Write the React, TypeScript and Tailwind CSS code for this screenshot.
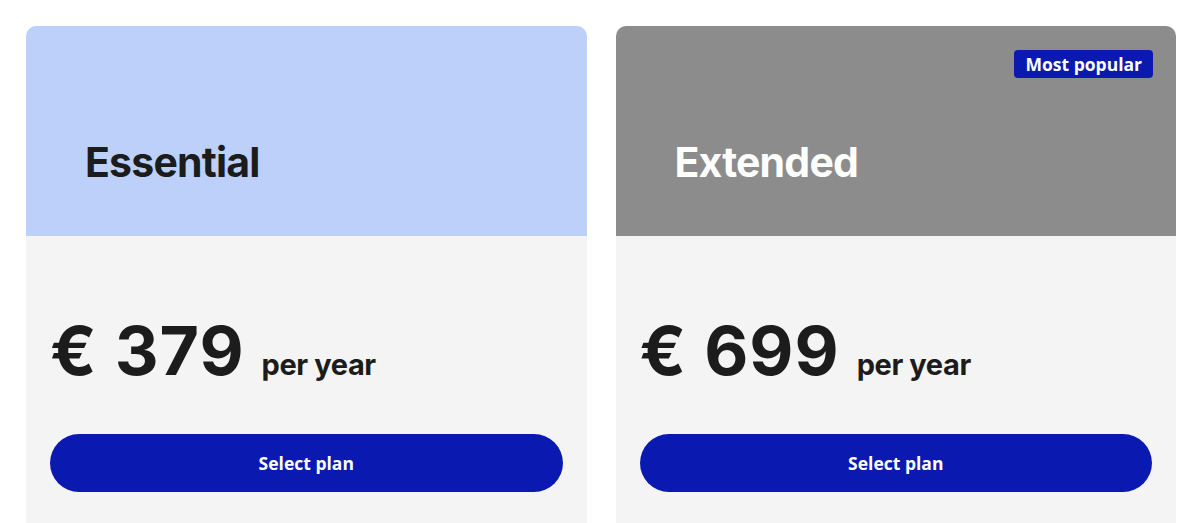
import React from "react";

const heading = { fontFamily: "Inter, 'Noto Sans', sans-serif" };

function Card({
  title,
  price,
  headerClass,
  titleClass,
  badge,
}: {
  title: string;
  price: string;
  headerClass: string;
  titleClass: string;
  badge?: string;
}) {
  return (
    <div className="flex flex-col">
      <div className={`relative h-[210px] rounded-t-[10px] pl-[59px] pt-[116px] ${headerClass}`}>
        {badge && (
          <span
            className="absolute right-[23px] top-[24px] flex h-[28px] items-center rounded-[4px] bg-[#0a1ab0] px-[11px] text-[17.5px] font-bold text-white"
            style={{ fontFamily: "'Open Sans', sans-serif" }}
          >
            {badge}
          </span>
        )}
        <h2
          className={`m-0 text-[41px] font-bold leading-none tracking-[-0.8px] ${titleClass}`}
          style={heading}
        >
          {title}
        </h2>
      </div>
      <div className="flex flex-col bg-[#f4f4f4] px-[24px] pb-[40px] pt-[80px]">
        <div className="flex items-baseline gap-[17px] text-[#1c1c1c]" style={heading}>
          <span className="text-[68px] font-bold leading-none tracking-[1px]">{price}</span>
          <span className="text-[29px] font-bold leading-none tracking-[-0.4px]">per year</span>
        </div>
        <button
          className="mt-[50px] flex h-[58px] w-full items-center justify-center rounded-full bg-[#0a1ab0] text-[17.5px] font-bold text-white"
          style={{ fontFamily: "'Open Sans', sans-serif" }}
        >
          Select plan
        </button>
      </div>
    </div>
  );
}

export default function App() {
  return (
    <div className="min-h-[523px] bg-white">
      <div className="grid grid-cols-2 gap-[29px] pl-[26px] pr-[24px] pt-[26px]">
        <Card
          title="Essential"
          price="€ 379"
          headerClass="bg-[#bdd0fa]"
          titleClass="text-[#1c1c1c]"
        />
        <Card
          title="Extended"
          price="€ 699"
          headerClass="bg-[#8c8c8c]"
          titleClass="text-white"
          badge="Most popular"
        />
      </div>
    </div>
  );
}
